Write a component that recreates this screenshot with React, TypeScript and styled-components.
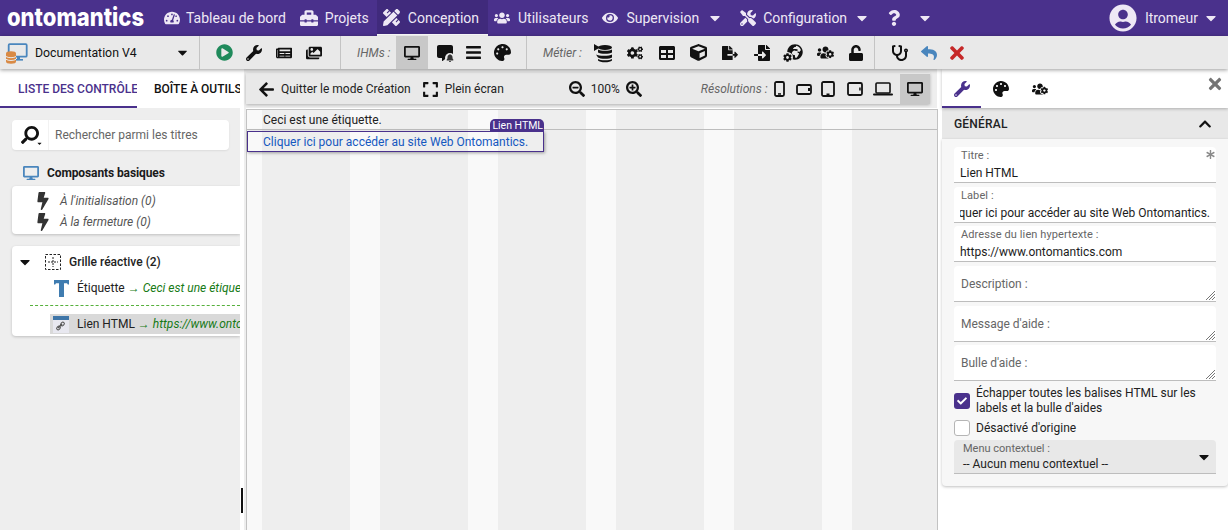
import React from "react";
import styled, { createGlobalStyle } from "styled-components";
import {
  FaTachometerAlt, FaToolbox, FaPencilRuler, FaUsers, FaEye, FaTools, FaQuestion, FaUserCircle, FaCaretDown,
  FaPlayCircle, FaWrench, FaNewspaper, FaImages, FaDesktop, FaCommentAlt, FaBars, FaPalette, FaCogs, FaTable,
  FaCube, FaFileExport, FaFileImport, FaGlobeAfrica, FaUsersCog, FaUnlock, FaStethoscope, FaReply, FaTimes,
  FaArrowLeft, FaExpand, FaSearchMinus, FaSearchPlus, FaSearch, FaBolt, FaChevronUp, FaAsterisk, FaCheck, FaBell, FaCog,
} from "react-icons/fa";

const PURPLE = "#4a318c";

const Global = createGlobalStyle`
  html, body { margin: 0; padding: 0; height: 100%; overflow: hidden; background: #fff; }
  body { font-family: Roboto, "Liberation Sans", sans-serif; font-size: 12px; color: #212121; }
  #root { height: 100%; }
  * { box-sizing: border-box; }
  svg:not(.draw) { width: auto; height: 1em; flex: none; }
`;

const Page = styled.div`
  width: 1228px; height: 530px; display: flex; flex-direction: column; overflow: hidden; background: #fff;
`;

/* Top bar */
const TopBar = styled.header`
  height: 36px; flex: none; background: ${PURPLE}; display: flex; align-items: stretch; color: #eee8f5;
`;
const Logo = styled.div`
  width: 150px; padding-left: 7px; flex: none; overflow: hidden;
`;
const LogoText = styled.span`
  display: inline-block; font-family: Inter, sans-serif; font-weight: 800; font-size: 25px;
  letter-spacing: 0; color: #fff; line-height: 35px; white-space: nowrap;
  transform: scaleX(0.88); transform-origin: left center;
`;
const NavItem = styled.div<{ $active?: boolean; $pl: number; $pr?: number; $gap?: number; $size?: number }>`
  display: flex; align-items: center; gap: ${p => p.$gap ?? 7}px; font-size: 14px;
  padding: 0 ${p => p.$pr ?? 0}px 0 ${p => p.$pl}px;
  white-space: nowrap; height: 36px;
  ${p => p.$active ? `background: #402a7c; border-bottom: 2px solid #fff; padding-top: 1px;` : ""}
  svg { font-size: ${p => p.$size ?? 16}px; }
`;
const NavGroup = styled.nav`
  display: flex; align-items: stretch;
`;
const UserBox = styled.div`
  margin-left: auto; display: flex; align-items: center; gap: 8px; font-size: 14px; padding-right: 9px;
  svg:first-child { font-size: 28px; }
`;
const UserCaret = styled(FaCaretDown)`
  font-size: 16px; margin-left: -3px;
`;

/* Main toolbar */
const ToolBar = styled.div`
  height: 33px; flex: none; background: #e9e9e9; display: flex; align-items: center;
  box-shadow: 0 1px 4px rgba(0,0,0,.4); position: relative; z-index: 3; color: #111;
`;
const ToolSection = styled.div<{ $w: number; $last?: boolean; $pl?: number }>`
  width: ${p => p.$w}px; height: 33px; flex: none; display: flex; align-items: center; padding-left: ${p => p.$pl ?? 0}px;
  ${p => (p.$last ? "" : "border-right: 1px solid #c4c4c4;")}
`;
const ProjectName = styled.span`
  font-size: 12.3px; margin-left: 6px; flex: 1; white-space: nowrap;
`;
const SelectCaret = styled(FaCaretDown)`
  font-size: 15px; margin-right: 9px;
`;
const ToolIcon = styled.span<{ $w?: number; $sel?: boolean; $size?: number; $color?: string }>`
  width: ${p => p.$w ?? 30}px; height: 33px; display: inline-flex; align-items: center; justify-content: center; flex: none;
  font-size: ${p => p.$size ?? 16}px; color: ${p => p.$color ?? "inherit"}; position: relative;
  ${p => (p.$sel ? "background: #c8c8c8;" : "")}
`;
const ToolLabel = styled.em`
  font-size: 12px; color: #666; white-space: nowrap; flex: none;
`;
const Spacer = styled.span<{ $w: number }>`
  width: ${p => p.$w}px; flex: none;
`;
const GlobeWrap = styled.span`
  position: relative; display: inline-flex; padding: 0 0 0 3px; margin-top: -2px;
`;
const GearBadge = styled.span`
  position: absolute; left: -2px; bottom: -3px; font-size: 9px; line-height: 9px; color: #111;
  background: #e9e9e9; border-radius: 50%; display: inline-flex; padding: 1px;
`;
const SmallBell = styled.span`
  position: absolute; right: 7px; bottom: 6px; display: inline-flex; font-size: 8px; color: #333;
  background: #e9e9e9; border-radius: 50%; padding: 1px;
`;

/* Body */
const Body = styled.div`
  flex: 1; display: flex; min-height: 0;
`;
const LeftPanel = styled.aside`
  width: 240px; flex: none; background: #eee; display: flex; flex-direction: column; align-items: stretch; overflow: hidden;
`;
const TabRow = styled.div`
  height: 39px; background: #fff; display: flex; flex: none;
`;
const TextTab = styled.div<{ $active?: boolean; $w: number }>`
  width: ${p => p.$w}px; flex: none; overflow: hidden; white-space: nowrap; font-size: 12px; font-weight: 500; display: flex; align-items: center;
  text-transform: uppercase; padding-left: ${p => (p.$active ? 18 : 17)}px; padding-top: 2px;
  color: ${p => (p.$active ? PURPLE : "#111")};
  border-bottom: 2px solid ${p => (p.$active ? PURPLE : "transparent")};
`;
const SearchBox = styled.div`
  margin: 12px 11px 0 12px; height: 30px; background: #fff; border-radius: 4px; display: flex; align-items: center;
  box-shadow: 0 1px 2px rgba(0,0,0,.08);
`;
const SearchIconBox = styled.span`
  width: 37px; height: 30px; flex: none; display: flex; align-items: center; justify-content: center; font-size: 18px; color: #111;
  border-right: 1px solid #f2f2f2; position: relative;
  svg:first-child { transform: scaleX(-1); }
`;
const SearchCaret = styled(FaCaretDown)`
  position: absolute; right: 5px; bottom: 3px; font-size: 7px;
`;
const SearchText = styled.span`
  font-size: 12px; color: #666; margin-left: 6px;
`;
const GroupTitle = styled.div`
  display: flex; align-items: center; height: 26px; margin: 9px 0 0 23px; gap: 8px; font-weight: 700; font-size: 12px; color: #1a1a1a;
  letter-spacing: -0.1px; height: 27px;
  svg { font-size: 16px; color: #4a86bd; }
`;
const Card = styled.div`
  margin-left: 12px; background: #fff; border-radius: 4px 0 0 4px; box-shadow: 0 1px 3px rgba(0,0,0,.2); overflow: hidden;
`;
const EventRow = styled.div`
  display: flex; align-items: center; height: 21px; padding-left: 22px; gap: 8px; font-style: italic; font-size: 12px; color: #555; white-space: nowrap;
  svg { font-size: 18px; color: #333; }
`;
const EventCard = styled(Card)`
  padding: 4px 0 2px; height: 48px;
`;
const TreeCard = styled(Card)`
  margin-top: 12px; height: 90px; padding-top: 5px;
`;
const TreeHead = styled.div`
  display: flex; align-items: center; height: 22px; white-space: nowrap; font-weight: 500; font-size: 12px; color: #222;
`;
const TreeName = styled.span`
  margin-left: 8px;
`;
const TreeCaret = styled(FaCaretDown)`
  font-size: 16px; margin: 0 12px 0 5px; color: #111;
`;
const TreeRow = styled.div<{ $sel?: boolean; $mt?: number }>`
  display: flex; align-items: center; height: 20px; margin-left: 38px; padding-left: 3px; white-space: nowrap; font-size: 12px; color: #222;
  margin-top: ${p => p.$mt ?? 0}px;
  ${p => (p.$sel ? "background: #d9d9d9;" : "")}
`;
const RowIcon = styled.span`
  width: 16px; margin-right: 8px; flex: none; display: inline-flex; justify-content: center;
`;
const Arrow = styled.span`
  font-family: "Liberation Sans", sans-serif; color: #167a16; margin: 0 3px 0 3px; font-size: 12px;
`;
const Green = styled.i`
  color: #167a16; font-style: italic;
`;
const DashLine = styled.div`
  margin: 7px 0 8px 18px; border-top: 1px dashed #56b03c;
`;
const Splitter = styled.div`
  width: 6px; flex: none; background: #fff; position: relative; border-right: 2px solid #eee;
`;
const Grip = styled.span`
  position: absolute; left: 1px; top: 419px; width: 2px; height: 25px; background: #111;
`;

/* Center */
const Center = styled.main`
  width: 692px; flex: none; display: flex; flex-direction: column; background: #fff;
`;
const CenterTopStrip = styled.div`
  height: 39px; flex: none; width: 691px; background: #eee;
`;
const CenterBar = styled.div`
  height: 31px; margin-top: 4px; width: 684px; background: #e9e9e9; display: flex; align-items: center; font-size: 12px; color: #222;
  box-shadow: 0 1px 3px rgba(0,0,0,.25); position: relative; padding-top: 1px;
`;
const BarBtn = styled.span<{ $w?: number; $sel?: boolean; $size?: number; $ml?: number }>`
  width: ${p => p.$w ?? 26}px; height: 30px; display: inline-flex; align-items: center; justify-content: center; flex: none;
  margin-left: ${p => p.$ml ?? 0}px;
  font-size: ${p => p.$size ?? 16}px; color: #111; ${p => (p.$sel ? "background: #c8c8c8;" : "")}
`;
const BarText = styled.span<{ $ml?: number }>`
  margin-left: ${p => p.$ml ?? 0}px; white-space: nowrap; flex: none;
`;
const BarLabel = styled.em`
  color: #666;
`;
const Canvas = styled.div`
  flex: 1; position: relative; border: 1px solid #c2c2c2; border-bottom: 0; margin-top: 1px;
  background: repeating-linear-gradient(to right, #f9f9f9 0, #f9f9f9 15px, #eeeeee 15px, #eeeeee 103px, #f9f9f9 103px, #f9f9f9 118px);
`;
const CanvasLabelRow = styled.div`
  height: 20px; border-bottom: 1px solid #bdbdbd; padding-left: 16px; font-size: 12px; line-height: 20px; color: #222;
`;
const SelectedRow = styled.div`
  position: relative; margin-top: 1px; width: 297px; height: 21px; border: 1px solid ${PURPLE}; padding-left: 15px;
  font-size: 12px; line-height: 20px; color: #1558c0; box-shadow: 1px 1px 3px rgba(0,0,0,.35); white-space: nowrap;
`;
const NameTag = styled.span`
  position: absolute; right: -1px; top: -13px; height: 13px; background: ${PURPLE}; color: #fff; font-size: 10.5px; line-height: 14px;
  padding: 0 1px 0 2px; border-radius: 5px 5px 0 0;
`;

/* Right */
const Gutter = styled.div`
  width: 4px; flex: none; background: #fff;
`;
const RightPanel = styled.aside`
  width: 286px; flex: none; display: flex; flex-direction: column; background: #fff; position: relative;
`;
const IconTabs = styled.div`
  height: 39px; flex: none; display: flex; background: #fff; box-shadow: 0 1px 3px rgba(0,0,0,.25); position: relative; z-index: 1;
`;
const IconTab = styled.span<{ $active?: boolean }>`
  width: 39px; flex: none; display: flex; align-items: center; justify-content: center; font-size: 16px; padding-top: 3px;
  color: ${p => (p.$active ? PURPLE : "#111")}; border-bottom: 2px solid ${p => (p.$active ? PURPLE : "transparent")};
`;
const CloseX = styled(FaTimes)`
  position: absolute; right: 4px; top: 6px; font-size: 18px; color: #757575;
`;
const SectionHead = styled.div`
  height: 31px; flex: none; background: #e8e8e8; display: flex; align-items: center; justify-content: space-between; padding: 1px 16px 0 12px;
  font-size: 12px; font-weight: 500; color: #222; letter-spacing: .2px;
  svg { font-size: 14px; color: #111; }
`;
const FormBody = styled.div`
  height: 347px; flex: none; background: #f7f7f7; padding: 8px 12px 0 12px; border-radius: 0 0 4px 4px; box-shadow: 0 1px 3px rgba(0,0,0,.25);
`;
const Field = styled.div<{ $mb?: number }>`
  position: relative; height: 36px; margin-bottom: ${p => p.$mb ?? 3.7}px; background: #fff; border-radius: 4px 4px 0 0; border-bottom: 1px solid #bdbdbd;
`;
const FieldLabel = styled.div`
  font-size: 11px; color: #666; padding: 2px 0 0 7px; line-height: 14px; white-space: nowrap; letter-spacing: .1px;
`;
const FieldValue = styled.div`
  font-size: 12px; color: #1c1c1c; margin: 2px 0 0 6px; line-height: 16px; white-space: nowrap; overflow: hidden;
`;
const ClippedValue = styled(FieldValue)`
  margin-right: 6px; display: flex; justify-content: flex-end;
`;
const TextAreaLabel = styled.div`
  font-size: 12px; color: #666; padding: 10px 0 0 7px; line-height: 16px;
`;
const Req = styled(FaAsterisk)`
  position: absolute; right: 1px; top: 3px; font-size: 9px; color: #8a8a8a;
`;
const Resize = styled.svg`
  position: absolute; right: 1px; bottom: 1px; width: 10px; height: 10px;
`;
const CheckRow = styled.div<{ $h: number }>`
  display: flex; align-items: center; gap: 6px; height: ${p => p.$h}px; font-size: 12px; line-height: 15px; color: #222;
`;
const CheckBox = styled.span<{ $on?: boolean }>`
  width: 16px; height: 16px; flex: none; border-radius: 3px; display: inline-flex; align-items: center; justify-content: center;
  font-size: 10px; color: #fff;
  ${p => (p.$on ? `background: ${PURPLE};` : "background: #fff; border: 1px solid #b5b5b5;")}
`;
const SelectField = styled.div`
  position: relative; height: 34px; background: #e8e8e8; border-radius: 4px 4px 0 0; border-bottom: 1px solid #bdbdbd; margin-top: 4px;
`;
const SelectLabel = styled.div`
  font-size: 11px; color: #666; padding: 2px 0 0 9px; line-height: 13px;
`;
const SelectValue = styled.div`
  font-size: 12px; color: #222; padding-left: 9px; line-height: 16px; margin-top: 1px;
`;
const SelectArrow = styled(FaCaretDown)`
  position: absolute; right: 4px; top: 9px; font-size: 16px; color: #111;
`;

const DbDesktop = () => (
  <svg className="draw" width="24" height="22" viewBox="0 0 24 22">
    <rect x="3.7" y="2.2" width="18" height="12.5" rx="1" fill="none" stroke="#4a86bd" strokeWidth="1.8" />
    <rect x="12" y="14.5" width="3" height="3" fill="#4a86bd" />
    <rect x="9" y="17" width="9" height="1.6" fill="#4a86bd" />
    <ellipse cx="6" cy="11.5" rx="5" ry="2.2" fill="#d98a45" />
    <rect x="1" y="11.5" width="10" height="8" fill="#d98a45" />
    <ellipse cx="6" cy="19.5" rx="5" ry="2.2" fill="#d98a45" />
    <path d="M1 14.5c2 1.6 8 1.6 10 0M1 17.3c2 1.6 8 1.6 10 0" stroke="#e9e9e9" strokeWidth="1" fill="none" />
  </svg>
);
const DbArrow = () => (
  <svg className="draw" width="20" height="20" viewBox="0 0 20 20" fill="#111">
    <path d="M1 1l6 3.5L1 8z" />
    <ellipse cx="12" cy="4.5" rx="7" ry="2.4" />
    <path d="M5 6.5c2 1.7 12 1.7 14 0v3c-2 1.7-12 1.7-14 0z" />
    <path d="M3 11.5c2.500 1.700 13.500 1.700 16 0v3c-2 1.700-12 1.700-14 0z" />
    <path d="M5 16c2 1.700 12 1.700 14 0v1.500c-2 2.400-12 2.400-14 0z" />
  </svg>
);
const GridIcon = () => (
  <svg className="draw" width="16" height="16" viewBox="0 0 16 16" fill="none" stroke="#222" strokeWidth="1">
    <rect x="0.5" y="0.500" width="15" height="15" strokeDasharray="2.500 1.500" />
    <path d="M8 3v10M3 8h10" strokeDasharray="2 1" />
  </svg>
);
const BlueT = () => (
  <svg className="draw" width="15" height="17" viewBox="0 0 15 17">
    <path d="M0 0h15v4.500h-1.200l-.8-1.200H10V17H5V3.300H2l-.8 1.200H0z" fill="#3f7cb0" />
  </svg>
);
const LinkDoc = () => (
  <svg className="draw" width="16" height="17" viewBox="0 0 16 17">
    <rect x="0" y="0" width="16" height="17" fill="#e8e8f0" />
    <rect x="0" y="0" width="16" height="4" fill="#3f76a8" />
    <path d="M5 12l4-4" stroke="#555" strokeWidth="1.600" />
    <rect x="3.500" y="10.500" width="4" height="3" rx="1.500" transform="rotate(-45 5.500 12)" fill="none" stroke="#555" strokeWidth="1" />
    <rect x="7.500" y="6.500" width="4" height="3" rx="1.500" transform="rotate(-45 9.500 8)" fill="none" stroke="#555" strokeWidth="1" />
  </svg>
);
const Phone = () => (
  <svg className="draw" width="11" height="16" viewBox="0 0 11 16" fill="none"><rect x="1" y="1" width="9" height="14" rx="1.500" stroke="#111" strokeWidth="1.800" /><rect x="4" y="12.200" width="3" height="1.500" fill="#111" /></svg>
);
const PhoneWide = () => (
  <svg className="draw" width="16" height="11" viewBox="0 0 16 11" fill="none"><rect x="1" y="1" width="14" height="9" rx="1.500" stroke="#111" strokeWidth="1.800" /><rect x="12" y="4" width="2" height="3" fill="#111" /></svg>
);
const Tablet = () => (
  <svg className="draw" width="14" height="16" viewBox="0 0 14 16" fill="none"><rect x="1" y="1" width="12" height="14" rx="1.500" stroke="#111" strokeWidth="1.800" /><rect x="5.500" y="12.500" width="3" height="1.500" fill="#111" /></svg>
);
const TabletWide = () => (
  <svg className="draw" width="16" height="14" viewBox="0 0 16 14" fill="none"><rect x="1" y="1" width="14" height="12" rx="1.500" stroke="#111" strokeWidth="1.800" /><rect x="12.200" y="5.500" width="1.500" height="3" fill="#111" /></svg>
);
const Laptop = () => (
  <svg className="draw" width="20" height="14" viewBox="0 0 20 14" fill="none"><rect x="3" y="1" width="14" height="10" rx="1" stroke="#111" strokeWidth="1.600" /><rect x="0" y="11.500" width="20" height="2" rx="1" fill="#111" /></svg>
);
const Grip2 = () => (
  <Resize className="draw" viewBox="0 0 10 10"><path d="M10 1L1 10M10 4L4 10M10 7L7 10" stroke="#777" strokeWidth="1" /></Resize>
);
const GlobeGear = () => (
  <GlobeWrap>
    <FaGlobeAfrica />
    <GearBadge><FaCog /></GearBadge>
  </GlobeWrap>
);

export default function App() {
  return (
    <Page>
      <Global />
      <TopBar>
        <Logo><LogoText>ontomantics</LogoText></Logo>
        <NavGroup>
          <NavItem $pl={14} $gap={6}><FaTachometerAlt />Tableau de bord</NavItem>
          <NavItem $pl={14} $pr={8} $size={18}><FaToolbox />Projets</NavItem>
          <NavItem $active $pl={6} $pr={9} $gap={8} $size={17}><FaPencilRuler />Conception</NavItem>
          <NavItem $pl={6} $gap={8}><FaUsers />Utilisateurs</NavItem>
          <NavItem $pl={14} $gap={8}><FaEye />Supervision<FaCaretDown /></NavItem>
          <NavItem $pl={17}><FaTools />Configuration<FaCaretDown /></NavItem>
          <NavItem $pl={16} $gap={15}><FaQuestion /><FaCaretDown /></NavItem>
        </NavGroup>
        <UserBox><FaUserCircle />ltromeur<UserCaret /></UserBox>
      </TopBar>

      <ToolBar>
        <ToolSection $w={200} $pl={5}>
          <DbDesktop />
          <ProjectName>Documentation V4</ProjectName>
          <SelectCaret />
        </ToolSection>
        <ToolSection $w={141} $pl={9}>
          <ToolIcon $color="#1f8a5b" $size={17}><FaPlayCircle /></ToolIcon>
          <ToolIcon><FaWrench /></ToolIcon>
          <ToolIcon><FaNewspaper /></ToolIcon>
          <ToolIcon><FaImages /></ToolIcon>
        </ToolSection>
        <ToolSection $w={186}>
          <Spacer $w={16} />
          <ToolLabel>IHMs :</ToolLabel>
          <Spacer $w={6} />
          <ToolIcon $w={32} $sel><FaDesktop /></ToolIcon>
          <ToolIcon $w={34}><FaCommentAlt /><SmallBell><FaBell /></SmallBell></ToolIcon>
          <ToolIcon $w={23} $size={17}><FaBars /></ToolIcon>
          <ToolIcon $w={34} $size={17}><FaPalette /></ToolIcon>
        </ToolSection>
        <ToolSection $w={348}>
          <Spacer $w={16} />
          <ToolLabel>Métier :</ToolLabel>
          <Spacer $w={5} />
          <ToolIcon $w={32}><DbArrow /></ToolIcon>
          <ToolIcon $w={32}><FaCogs /></ToolIcon>
          <ToolIcon $w={32}><FaTable /></ToolIcon>
          <ToolIcon $w={32} $size={17}><FaCube /></ToolIcon>
          <ToolIcon $w={31}><FaFileExport /></ToolIcon>
          <ToolIcon $w={32}><FaFileImport /></ToolIcon>
          <ToolIcon $w={31}><GlobeGear /></ToolIcon>
          <ToolIcon $w={33} $size={17}><FaUsersCog /></ToolIcon>
          <ToolIcon $w={28}><FaUnlock /></ToolIcon>
        </ToolSection>
        <ToolSection $w={120} $last $pl={10}>
          <ToolIcon $w={29}><FaStethoscope /></ToolIcon>
          <ToolIcon $w={29} $color="#4a86bd"><FaReply /></ToolIcon>
          <ToolIcon $w={27} $color="#c62828" $size={20}><FaTimes /></ToolIcon>
        </ToolSection>
      </ToolBar>

      <Body>
        <LeftPanel>
          <TabRow>
            <TextTab $active $w={137}>Liste des contrôles</TextTab>
            <TextTab $w={103}>Boîte à outils</TextTab>
          </TabRow>
          <SearchBox>
            <SearchIconBox><FaSearch /><SearchCaret /></SearchIconBox>
            <SearchText>Rechercher parmi les titres</SearchText>
          </SearchBox>
          <GroupTitle><FaDesktop />Composants basiques</GroupTitle>
          <EventCard>
            <EventRow><FaBolt />À l'initialisation (0)</EventRow>
            <EventRow><FaBolt />À la fermeture (0)</EventRow>
          </EventCard>
          <TreeCard>
            <TreeHead><TreeCaret /><GridIcon /><TreeName>Grille réactive (2)</TreeName></TreeHead>
            <TreeRow $mt={5}><RowIcon><BlueT /></RowIcon>Étiquette<Arrow>→</Arrow><Green>Ceci est une étiquette.</Green></TreeRow>
            <DashLine />
            <TreeRow $sel><RowIcon><LinkDoc /></RowIcon>Lien HTML<Arrow>→</Arrow><Green>https://www.ontomantics.com</Green></TreeRow>
          </TreeCard>
        </LeftPanel>
        <Splitter><Grip /></Splitter>
        <Center>
          <CenterTopStrip>
            <CenterBar>
              <BarBtn $ml={7} $size={17}><FaArrowLeft /></BarBtn>
              <BarText $ml={2}>Quitter le mode Création</BarText>
              <BarBtn $ml={7} $size={17}><FaExpand /></BarBtn>
              <BarText $ml={1}>Plein écran</BarText>
              <BarBtn $w={20} $ml={63}><FaSearchMinus /></BarBtn>
              <BarText $ml={4}>100%</BarText>
              <BarBtn $w={20} $ml={4}><FaSearchPlus /></BarBtn>
              <BarText $ml={57}><BarLabel>Résolutions :</BarLabel></BarText>
              <BarBtn $w={20} $ml={2}><Phone /></BarBtn>
              <BarBtn $w={28}><PhoneWide /></BarBtn>
              <BarBtn $w={21}><Tablet /></BarBtn>
              <BarBtn $w={32}><TabletWide /></BarBtn>
              <BarBtn $w={25}><Laptop /></BarBtn>
              <BarBtn $w={30} $ml={4} $sel><FaDesktop /></BarBtn>
            </CenterBar>
          </CenterTopStrip>
          <Canvas>
            <CanvasLabelRow>Ceci est une étiquette.</CanvasLabelRow>
            <SelectedRow>Cliquer ici pour accéder au site Web Ontomantics.<NameTag>Lien HTML</NameTag></SelectedRow>
          </Canvas>
        </Center>
        <Gutter />
        <RightPanel>
          <IconTabs>
            <IconTab $active><FaWrench /></IconTab>
            <IconTab><FaPalette /></IconTab>
            <IconTab><FaUsersCog /></IconTab>
            <CloseX />
          </IconTabs>
          <SectionHead>GÉNÉRAL<FaChevronUp /></SectionHead>
          <FormBody>
            <Field>
              <FieldLabel>Titre :</FieldLabel>
              <FieldValue>Lien HTML</FieldValue>
              <Req />
            </Field>
            <Field>
              <FieldLabel>Label :</FieldLabel>
              <ClippedValue>Cliquer ici pour accéder au site Web Ontomantics.</ClippedValue>
            </Field>
            <Field>
              <FieldLabel>Adresse du lien hypertexte :</FieldLabel>
              <FieldValue>https://www.ontomantics.com</FieldValue>
            </Field>
            <Field><TextAreaLabel>Description :</TextAreaLabel><Grip2 /></Field>
            <Field><TextAreaLabel>Message d'aide :</TextAreaLabel><Grip2 /></Field>
            <Field $mb={1}><TextAreaLabel>Bulle d'aide :</TextAreaLabel><Grip2 /></Field>
            <CheckRow $h={38}>
              <CheckBox $on><FaCheck /></CheckBox>
              <span>Échapper toutes les balises HTML sur les labels et la bulle d'aides</span>
            </CheckRow>
            <CheckRow $h={16}>
              <CheckBox />
              <span>Désactivé d'origine</span>
            </CheckRow>
            <SelectField>
              <SelectLabel>Menu contextuel :</SelectLabel>
              <SelectValue>-- Aucun menu contextuel --</SelectValue>
              <SelectArrow />
            </SelectField>
          </FormBody>
        </RightPanel>
      </Body>
    </Page>
  );
}
